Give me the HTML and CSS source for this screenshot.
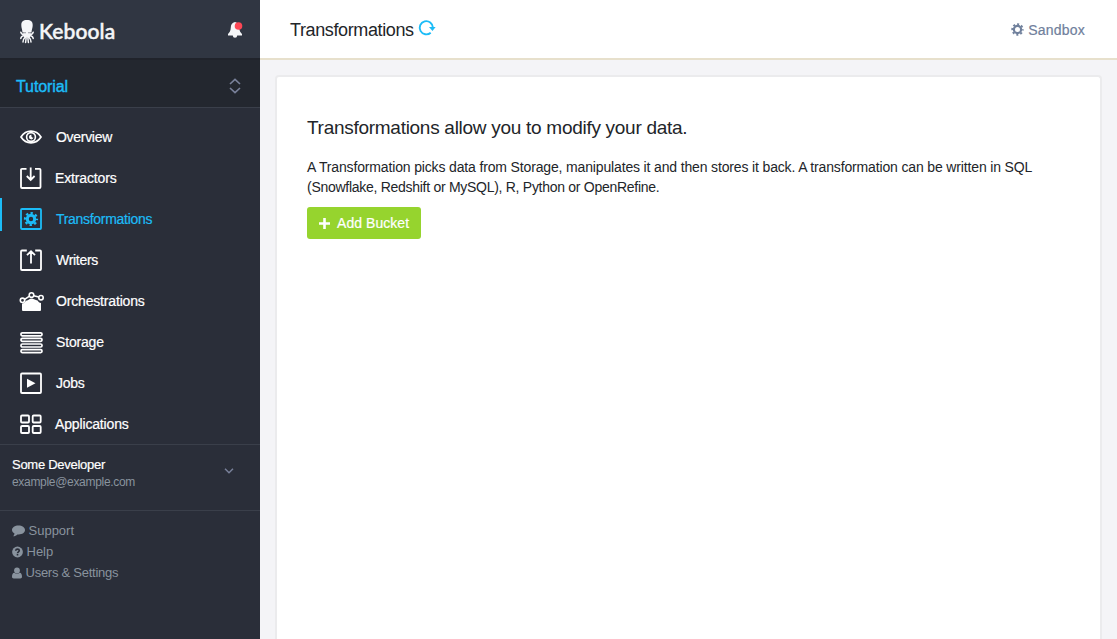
FILE: index.html
```html
<!DOCTYPE html>
<html lang="en">
<head>
<meta charset="utf-8">
<title>Transformations</title>
<link rel="stylesheet" href="styles.css">
</head>
<body>
<aside class="sidebar">
  <div class="brand">
    <svg class="brand-logo" width="15" height="25" viewBox="0 0 15 25"><path fill="#f5f6f8" d="M7 0C3 0 1.300 1.600 1.300 5c0 3 .9 4 1.200 7.500h9C11.800 9 12.700 8 12.700 5c0-3.400-1.700-5-5.700-5z"/><path fill="none" stroke="#f5f6f8" stroke-width="1.500" stroke-linecap="round" d="M.8 12.200c.6 2 2.200 2.600 4 2.600M13.200 12.200c-.6 2-2.200 2.600-4 2.600M4.500 15.500C2.500 15.800 1 16.500.8 18.500M9.500 15.500c2 .3 3.500 1 3.700 3M5.500 16.500C4.200 18 3 20 3 22M8.500 16.500C9.800 18 11 20 11 22M6.200 17.500 5.600 22.500M7.800 17.500l.6 5M4 13.500h6"/><path fill="#f5f6f8" d="M4 12h6v5H4z"/><path fill="#303642" d="M4.500 12.300h1v1h-1zM8.500 12.300h1v1h-1z"/></svg>
    <span class="brand-name">Keboola</span>
    <svg class="bell" width="18" height="18" viewBox="0 0 18 18"><path fill="#f5f6f8" d="M8 1C5 1.500 3.900 3.800 3.800 6.500 3.700 10 2.500 11.500 1 13v1.500h4.800a2.200 2.200 0 0 0 4.400 0H15V13c-1.500-1.500-2.700-3-2.800-6.500C12.100 3.800 11 1.500 8 1z"/><circle cx="11.500" cy="5" r="3.800" fill="#fd4755"/></svg>
  </div>
  <div class="project">
    <span class="project-name">Tutorial</span>
    <svg class="chevrons" width="12" height="16" viewBox="0 0 12 16"><path fill="none" stroke="#79819a" stroke-width="1.600" d="M1 6l5-4.700L11 6M1 10l5 4.700L11 10"/></svg>
  </div>
  <nav class="nav">
    <a class="nav-item"><svg class="nav-icon" viewBox="0 0 24 24"><path d="M2 12C7 4.200 17 4.200 22 12 17 19.800 7 19.800 2 12z" stroke-width="1.700"/><circle cx="12" cy="12" r="4.400" stroke-width="1.600"/><path d="M12.500 9.800a2.300 2.300 0 1 0 2 2.800c-1.500.3-2.600-1-2-2.800z" fill="currentColor" stroke="none"/></svg><span class="label l-overview">Overview</span></a>
    <a class="nav-item"><svg class="nav-icon" viewBox="0 0 24 24"><path d="M7.500 2.800H3a1 1 0 0 0-1 1V21a1 1 0 0 0 1 1h17.500a1 1 0 0 0 1-1V3.800a1 1 0 0 0-1-1H16M11.700 1.500v12.500M7.800 10l3.900 4 3.900-4"/></svg><span class="label l-extractors">Extractors</span></a>
    <a class="nav-item active"><svg class="nav-icon" viewBox="0 0 24 24"><rect x="2" y="2" width="20" height="20" rx="1"/><circle cx="12" cy="12" r="3.700" stroke-width="3"/><circle cx="12" cy="12" r="6" stroke-width="2.200" stroke-dasharray="2.360 2.352" stroke-dashoffset="1.180"/></svg><span class="label l-transformations">Transformations</span></a>
    <a class="nav-item"><svg class="nav-icon" viewBox="0 0 24 24"><path d="M7.800 2.500H3a1 1 0 0 0-1 1V21a1 1 0 0 0 1 1h18a1 1 0 0 0 1-1V3.500a1 1 0 0 0-1-1h-4.800M12 15.500V3.200M8 7.200l4-4 4 4"/></svg><span class="label l-writers">Writers</span></a>
    <a class="nav-item"><svg class="nav-icon" viewBox="0 0 24 24"><path d="M3 21v-6.500c2-.2 3.300-1.200 3.800-2.700C8.500 11.800 10.500 9.500 13 9.500l6 2.200c.4 1.400 1.300 2.100 3 2.300V21a1 1 0 0 1-1 1H4a1 1 0 0 1-1-1z" fill="currentColor" stroke="none"/><g stroke-width="1.600"><circle cx="3.500" cy="11.300" r="2.200"/><circle cx="12.500" cy="6" r="2.300"/><circle cx="22" cy="8.700" r="2.200"/><path d="M5.600 10.400 10.500 7.200M14.700 6.700l5.100 1.400"/></g></svg><span class="label l-orchestrations">Orchestrations</span></a>
    <a class="nav-item"><svg class="nav-icon" viewBox="0 0 24 24"><g stroke-width="1.700"><rect x="2" y="2.800" width="21" height="3" rx="1.300"/><rect x="2" y="8.400" width="21" height="3" rx="1.300"/><rect x="2" y="14" width="21" height="3" rx="1.300"/><rect x="2" y="19.600" width="21" height="3" rx="1.300"/></g></svg><span class="label l-storage">Storage</span></a>
    <a class="nav-item"><svg class="nav-icon" viewBox="0 0 24 24"><rect x="2" y="2.500" width="20" height="19.500" rx="1"/><path d="M8 7.800v9l8.500-4.500z" fill="currentColor" stroke="none"/></svg><span class="label l-jobs">Jobs</span></a>
    <a class="nav-item"><svg class="nav-icon" viewBox="0 0 24 24"><rect x="2" y="3.500" width="8" height="7" rx="1"/><rect x="13.700" y="3.500" width="8" height="7" rx="1"/><rect x="2" y="14" width="8" height="7" rx="1"/><rect x="13.700" y="14" width="8" height="7" rx="1"/></svg><span class="label l-applications">Applications</span></a>
  </nav>
  <div class="user">
    <div class="user-text"><div class="user-name">Some Developer</div><div class="user-mail">example@example.com</div></div>
    <svg class="user-chevron" width="10" height="8" viewBox="0 0 10 8"><path fill="none" stroke="#79819a" stroke-width="1.500" d="M1 1.800l4 4 4-4"/></svg>
  </div>
  <div class="links">
    <a class="link"><svg width="13" height="12" viewBox="0 0 13 12"><path fill="currentColor" d="M6.500.6C2.900.6 0 2.600 0 5.100c0 1.500 1 2.700 2.500 3.500-.1 1.100-.6 1.900-1.300 2.700 1.700-.2 3.100-.8 4.200-1.900 4.200.5 7.600-1.500 7.600-4.300C13 2.600 10.100.6 6.500.6z"/></svg><span class="l-support">Support</span></a>
    <a class="link"><svg width="11" height="12" viewBox="0 0 11 12"><circle cx="5.500" cy="6" r="5.400" fill="currentColor"/><path fill="none" stroke="#2a2e39" stroke-width="1.600" d="M3.700 4.700C3.800 2.500 7.300 2.600 7.300 4.600c0 1.300-1.700 1.200-1.800 2.600M5.500 8v1.500"/></svg><span class="l-help">Help</span></a>
    <a class="link"><svg width="10" height="12" viewBox="0 0 10 12"><circle cx="5" cy="3.500" r="2.900" fill="currentColor"/><path fill="currentColor" d="M2.300 5.700C.7 5.800 0 7.300 0 9.800 0 10.800.7 11.500 1.700 11.500h6.600c1 0 1.700-.7 1.700-1.700 0-2.500-.7-4-2.300-4.100-1.500 1.400-3.900 1.400-5.400 0z"/></svg><span class="l-settings">Users &amp; Settings</span></a>
  </div>
</aside>
<main class="main">
  <header class="topbar">
    <h1 class="title">Transformations</h1>
    <svg class="refresh" width="18" height="18" viewBox="0 0 18 18"><path fill="none" stroke="#1cbcf7" stroke-width="1.900" d="M12.700 13.700A6.600 6.600 0 1 1 14.900 8.600"/><path fill="#1cbcf7" d="M11 8h6.600l-3.100 4z"/></svg>
    <a class="sandbox"><svg width="13" height="13" viewBox="0 0 13 13"><circle cx="6.500" cy="6.500" r="3.600" fill="none" stroke="currentColor" stroke-width="2.200"/><circle cx="6.500" cy="6.500" r="5.300" fill="none" stroke="currentColor" stroke-width="1.800" stroke-dasharray="2.080 2.083" stroke-dashoffset="1.040"/></svg><span class="l-sandbox">Sandbox</span></a>
  </header>
  <section class="panel">
    <h2 class="heading">Transformations allow you to modify your data.</h2>
    <p class="copy"><span class="line-one">A Transformation picks data from Storage, manipulates it and then stores it back. A transformation can be written in SQL</span><br><span class="line-two">(Snowflake, Redshift or MySQL), R, Python or OpenRefine.</span></p>
    <button class="add"><svg width="11" height="11" viewBox="0 0 11 11"><path fill="none" stroke="#fff" stroke-width="2.600" d="M5.500 0v11M0 5.500h11"/></svg><span>Add Bucket</span></button>
  </section>
</main>
</body>
</html>
```

FILE: styles.css
```css
* { box-sizing: border-box; }
body { margin: 0; height: 639px; display: flex; overflow: hidden; font: 14px/20px "Liberation Sans", Arial, sans-serif; background: #f4f4f7; color: #222529; }
svg { display: block; flex: none; overflow: visible; }
span { white-space: nowrap; }

.sidebar { width: 260px; flex: none; background: #2a2e39; color: #fff; }
.brand { height: 60px; display: flex; align-items: flex-start; padding: 20px 15px 0 20px; background: #303642; border-bottom: 2px solid #20232b; }
.brand-name { margin-left: 4px; font: 500 21px/22px Lato, sans-serif; color: #f5f6f8; letter-spacing: .1px; -webkit-text-stroke: .5px; }
.bell { margin: 1px 0 0 auto; }
.project { height: 48px; display: flex; align-items: center; justify-content: space-between; padding: 6px 19px 0 16px; background: #23272f; border-bottom: 1px solid #3a3f4a; }
.project-name { font-size: 16px; color: #1cbcf7; -webkit-text-stroke: .4px; letter-spacing: -.1px; }
.chevrons { margin-top: -2px; }
.nav { height: 336px; padding-top: 8px; }
.nav-item { height: 41px; display: flex; align-items: center; padding-left: 19px; position: relative; }
.nav-icon { width: 24px; height: 24px; fill: none; stroke: currentColor; stroke-width: 1.8; margin-top: 1px; }
.label { margin-left: 13px; letter-spacing: -.3px; -webkit-text-stroke: .2px; margin-top: 1px; }
.l-extractors, .l-applications { margin-left: 12px; letter-spacing: -.15px; }
.l-orchestrations, .l-storage { letter-spacing: -.17px; }
.active { color: #1cbcf7; }
.active::before { content: ""; position: absolute; left: 0; top: 0; width: 2px; height: 33px; background: #1cbcf7; }
.user { height: 66px; display: flex; justify-content: space-between; padding: 11px 26px 0 12px; border-top: 1px solid #3a3f4a; }
.user-name { font-size: 13px; line-height: 18px; letter-spacing: -.27px; -webkit-text-stroke: .2px; }
.user-mail { font-size: 12px; line-height: 16px; color: #89939e; letter-spacing: -.31px; }
.user-chevron { margin-top: 11px; }
.links { padding: 9px 12px; border-top: 1px solid #3a3f4a; color: #89939e; font-size: 13px; }
.link { height: 21px; display: flex; align-items: center; gap: 3.5px; }
.l-settings { letter-spacing: -.25px; }

.main { flex: 1; display: flex; flex-direction: column; }
.topbar { height: 60px; flex: none; display: flex; align-items: center; padding: 0 32px 0 30px; background: #fff; border-bottom: 2px solid #e7e0cc; }
.title { margin: 1px 0 0; font-size: 18px; font-weight: 400; letter-spacing: -.38px; }
.refresh { margin: -2px 0 0 4px; }
.sandbox { margin-left: auto; display: flex; align-items: center; gap: 4px; color: #70809c; -webkit-text-stroke: .2px; }
.l-sandbox { letter-spacing: .2px; }
.panel { margin: 15px 15px 0; flex: 1; padding: 39px 30px 0; background: #fff; border: 2px solid #ebebed; border-bottom: 0; border-radius: 4px 4px 0 0; }
.heading { margin: 0 0 17px; font-size: 19px; line-height: 24px; font-weight: 400; white-space: nowrap; letter-spacing: -.28px; }
.copy { margin: 0 0 10px; line-height: 20px; }
.line-one { letter-spacing: -.15px; }
.line-two { letter-spacing: -.28px; }
.add { width: 114px; height: 32px; padding: 0 0 0 12px; display: flex; align-items: center; gap: 7px; border: 0; border-radius: 3px; background: #96d42e; color: #fff; font: 14px/20px "Liberation Sans", Arial, sans-serif; letter-spacing: .05px; -webkit-text-stroke: .2px; }
.sandbox { padding-top: 1px; }
```
